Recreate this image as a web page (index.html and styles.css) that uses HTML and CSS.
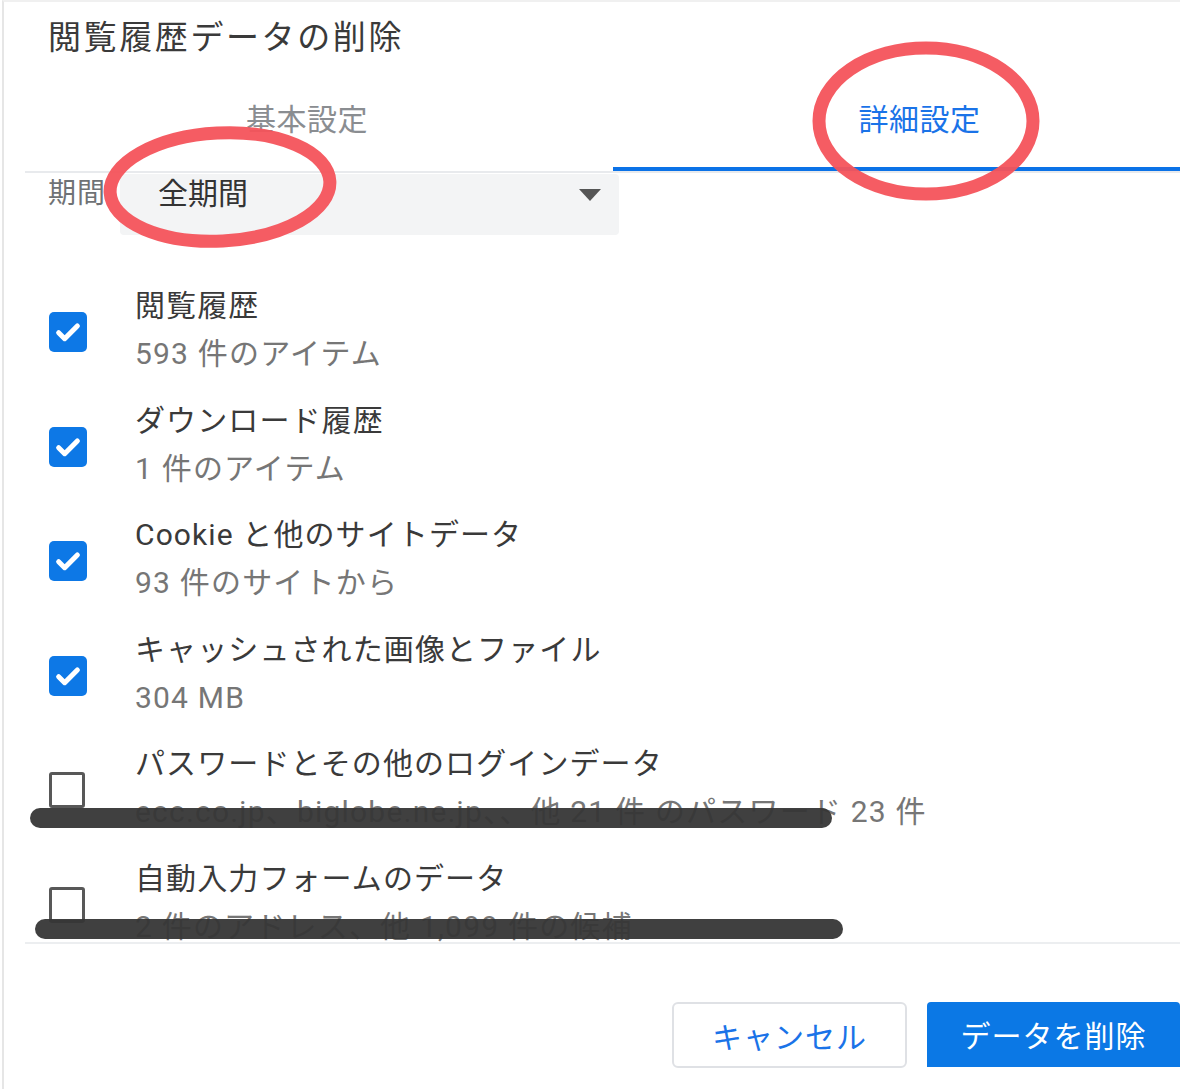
FILE: index.html
```html
<!DOCTYPE html>
<html lang="ja">
<head>
<meta charset="utf-8">
<title>閲覧履歴データの削除</title>
<link rel="stylesheet" href="styles.css">
</head>
<body>
<div class="dialog">
  <h1 class="title">閲覧履歴データの削除</h1>

  <div class="tabs">
    <div class="tab tab-basic">基本設定</div>
    <div class="tab tab-advanced">詳細設定</div>
  </div>

  <div class="period">
    <span class="period-label">期間</span>
    <div class="select">
      <span class="select-value">全期間</span>
      <span class="select-arrow"></span>
    </div>
  </div>

  <div class="options">
    <div class="option">
      <span class="checkbox checked"><svg viewBox="0 0 24 24"><path d="M5 12.5l4.5 4.5L19 7.5" /></svg></span>
      <div class="option-text">
        <div class="option-title">閲覧履歴</div>
        <div class="option-sub">593 件のアイテム</div>
      </div>
    </div>
    <div class="option">
      <span class="checkbox checked"><svg viewBox="0 0 24 24"><path d="M5 12.5l4.5 4.5L19 7.5" /></svg></span>
      <div class="option-text">
        <div class="option-title">ダウンロード履歴</div>
        <div class="option-sub">1 件のアイテム</div>
      </div>
    </div>
    <div class="option">
      <span class="checkbox checked"><svg viewBox="0 0 24 24"><path d="M5 12.5l4.5 4.5L19 7.5" /></svg></span>
      <div class="option-text">
        <div class="option-title">Cookie と他のサイトデータ</div>
        <div class="option-sub">93 件のサイトから</div>
      </div>
    </div>
    <div class="option">
      <span class="checkbox checked"><svg viewBox="0 0 24 24"><path d="M5 12.5l4.5 4.5L19 7.5" /></svg></span>
      <div class="option-text">
        <div class="option-title">キャッシュされた画像とファイル</div>
        <div class="option-sub">304 MB</div>
      </div>
    </div>
    <div class="option">
      <span class="checkbox"></span>
      <div class="option-text">
        <div class="option-title">パスワードとその他のログインデータ</div>
        <div class="option-sub">ecc.co.jp、biglobe.ne.jp、、他 21 件 のパスワード 23 件</div>
      </div>
    </div>
    <div class="option">
      <span class="checkbox"></span>
      <div class="option-text">
        <div class="option-title">自動入力フォームのデータ</div>
        <div class="option-sub">2 件のアドレス、他 1,099 件の候補</div>
      </div>
    </div>
  </div>

  <div class="footer">
    <button class="btn btn-cancel">キャンセル</button>
    <button class="btn btn-delete">データを削除</button>
  </div>
</div>

<div class="marks">
  <span class="scribble scribble-1"></span>
  <span class="scribble scribble-2"></span>
  <svg class="circles" width="1200" height="1089" viewBox="0 0 1200 1089">
    <ellipse cx="220" cy="187" rx="110" ry="54" transform="rotate(-3 220 187)" />
    <ellipse cx="926" cy="121" rx="107" ry="73" />
  </svg>
</div>
</body>
</html>
```

FILE: styles.css
```css
html, body {
  margin: 0;
  padding: 0;
  background: #ffffff;
}

body {
  position: relative;
  width: 1200px;
  height: 1089px;
  overflow: hidden;
  font-family: Roboto, "Noto Sans CJK JP", sans-serif;
  color: #3c4043;
}

.dialog {
  box-sizing: border-box;
  width: 1178px;
  height: 1089px;
  margin-left: 2px;
  border-left: 2px solid #e6e6e6;
  border-top: 2px solid #f0f0f0;
}

.title {
  margin: 0;
  padding: 12px 0 0 44px;
  font-size: 33px;
  font-weight: 400;
  line-height: 48px;
  color: #3a3a3a;
  letter-spacing: 2.6px;
}

.tabs {
  display: flex;
  margin-left: 21px;
  border-bottom: 2px solid #e8eaed;
}

.tab {
  box-sizing: border-box;
  height: 109px;
  padding-top: 34px;
  font-size: 30px;
  line-height: 48px;
  text-align: center;
  letter-spacing: 0.5px;
}

.tab-basic {
  width: 588px;
  padding-right: 24px;
  color: #8a8d91;
}

.tab-advanced {
  flex: 1;
  padding-left: 46px;
  color: #1a73e8;
  border-bottom: 4px solid #0b72e7;
}

.period {
  display: flex;
  align-items: flex-start;
  padding-left: 44px;
  padding-top: 1px;
}

.period-label {
  width: 72px;
  font-size: 28px;
  line-height: 40px;
  color: #6f7275;
  letter-spacing: 1px;
}

.select {
  display: flex;
  align-items: flex-start;
  justify-content: space-between;
  box-sizing: border-box;
  width: 499px;
  height: 61px;
  padding: 0 18px 0 38px;
  background: #f3f4f5;
  border-radius: 4px;
}

.select-value {
  font-size: 30px;
  line-height: 40px;
  color: #333333;
}

.select-arrow {
  width: 0;
  height: 0;
  margin-top: 15px;
  border-left: 11px solid transparent;
  border-right: 11px solid transparent;
  border-top: 12px solid #555555;
}

.options {
  display: flex;
  flex-direction: column;
  gap: 27.6px;
  margin-top: 47px;
}

.option {
  display: flex;
  align-items: center;
  padding-left: 45px;
}

.checkbox {
  box-sizing: border-box;
  display: flex;
  align-items: center;
  justify-content: center;
  width: 36px;
  height: 36px;
  margin-top: 13px;
  margin-right: 50px;
  border: 3px solid #585858;
  border-radius: 3px;
}

.checkbox.checked {
  width: 38px;
  height: 40px;
  margin-right: 48px;
  border: none;
  border-radius: 5px;
  background: #0d78e6;
}

.checkbox svg {
  width: 32px;
  height: 32px;
  fill: none;
  stroke: #ffffff;
  stroke-width: 3.8;
  stroke-linecap: round;
  stroke-linejoin: round;
}

.option-title {
  font-size: 30px;
  line-height: 48px;
  color: #3a3a3a;
  letter-spacing: 1.1px;
}

.option-sub {
  margin-top: 9px;
  font-size: 30px;
  line-height: 30px;
  color: #767676;
  letter-spacing: 1.2px;
}

.footer {
  display: flex;
  justify-content: flex-end;
  gap: 20px;
  margin-left: 21px;
  margin-top: 0;
  padding-top: 58px;
  border-top: 2px solid #eceef0;
}

.btn {
  box-sizing: border-box;
  height: 66px;
  font-family: Roboto, "Noto Sans CJK JP", sans-serif;
  font-size: 30px;
  letter-spacing: 1px;
  border-radius: 6px;
  cursor: pointer;
}

.btn-cancel {
  width: 235px;
  background: #ffffff;
  color: #1a73e8;
  border: 2px solid #dfe1e5;
}

.btn-delete {
  width: 253px;
  height: 65px;
  background: #0b78e5;
  color: #ffffff;
  border: none;
  border-radius: 4px 4px 0 0;
}

.marks {
  position: absolute;
  left: 0;
  top: 0;
  width: 1200px;
  height: 1089px;
  pointer-events: none;
}

.scribble {
  position: absolute;
  height: 20px;
  background: #363636;
  border-radius: 10px;
  opacity: 0.95;
}

.scribble-1 {
  left: 30px;
  top: 808px;
  width: 802px;
}

.scribble-2 {
  left: 35px;
  top: 919px;
  width: 808px;
}

.circles {
  position: absolute;
  left: 0;
  top: 0;
}

.circles ellipse {
  fill: none;
  stroke: #f4535b;
  stroke-width: 13;
  opacity: 0.95;
}
```
